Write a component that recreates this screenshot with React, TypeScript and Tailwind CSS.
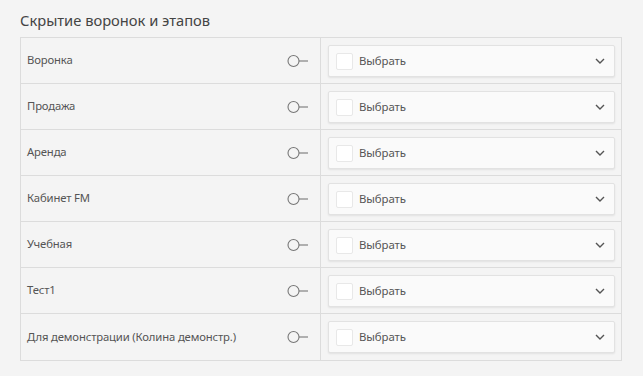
const rows = [
  'Воронка',
  'Продажа',
  'Аренда',
  'Кабинет FM',
  'Учебная',
  'Тест1',
  'Для демонстрации (Колина демонстр.)',
];

function ToggleIcon() {
  return (
    <svg width="22" height="14" viewBox="0 0 22 14" fill="none">
      <circle cx="6.5" cy="7" r="5.5" stroke="#777" strokeWidth="1.1" />
      <line x1="12" y1="7" x2="21" y2="7" stroke="#777" strokeWidth="1.1" />
    </svg>
  );
}

function SelectBox() {
  return (
    <div className="flex h-[32px] items-center rounded-[2px] border border-[#e2e2e2] bg-[#fafafa] pl-[7px] pr-[9px] shadow-[0_1px_2px_rgba(0,0,0,0.08)]">
      <span className="h-[17px] w-[17px] rounded-[2px] border border-[#e8e8e8] bg-white" />
      <span className="ml-[6px] flex-1 text-[11.4px] tracking-[-0.1px] text-[#555]">Выбрать</span>
      <svg width="10" height="6" viewBox="0 0 10 6" fill="none">
        <path d="M1 1l4 4 4-4" stroke="#555" strokeWidth="1.4" />
      </svg>
    </div>
  );
}

export default function App() {
  return (
    <div
      className="h-[376px] w-[643px] bg-[#f4f4f4] px-[20px] pt-[10px]"
      style={{ fontFamily: '"Noto Sans", "Open Sans", sans-serif' }}
    >
      <h2 className="mb-[7px] text-[14.7px] leading-[20px] text-[#444]">Скрытие воронок и этапов</h2>
      <div className="w-[602px] border border-[#dcdcdc]">
        {rows.map((name, i) => (
          <div
            key={name}
            className={`flex h-[46px] ${i < rows.length - 1 ? 'border-b border-[#dcdcdc]' : 'h-[45px]'}`}
          >
            <div className="flex w-[300px] items-center border-r border-[#dcdcdc] pl-[6px] pr-[11px]">
              <span className="flex-1 text-[11.3px] tracking-[-0.15px] text-[#555]">{name}</span>
              <ToggleIcon />
            </div>
            <div className="flex-1 pl-[7px] pr-[6px] pt-[7px]">
              <SelectBox />
            </div>
          </div>
        ))}
      </div>
    </div>
  );
}
